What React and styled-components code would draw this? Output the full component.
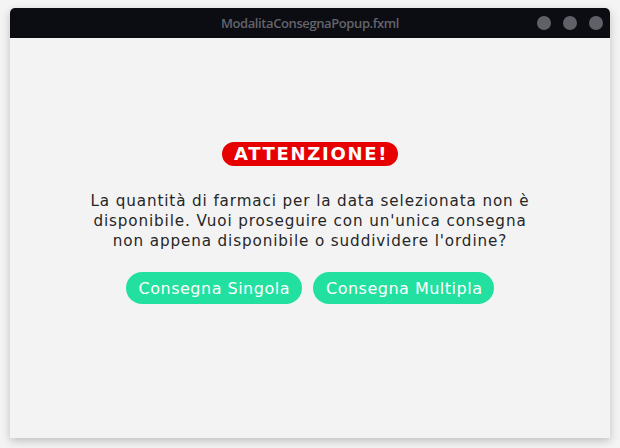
import React from "react";
import styled, { createGlobalStyle } from "styled-components";

const Global = createGlobalStyle`
  html, body { margin: 0; padding: 0; background: #f3f3f3; }
  body { width: 620px; height: 448px; overflow: hidden; }
`;

const Page = styled.div`
  width: 620px;
  height: 448px;
  padding: 8px 10px 10px 10px;
  box-sizing: border-box;
  background: #f4f4f4;
`;

const Window = styled.div`
  width: 600px;
  height: 430px;
  display: flex;
  flex-direction: column;
  border-radius: 5px 5px 0 0;
  overflow: hidden;
  background: #f3f3f3;
  box-shadow: 0 3px 10px rgba(0, 0, 0, 0.22);
`;

const TitleBar = styled.div`
  height: 30px;
  flex: 0 0 30px;
  background: #0c0d12;
  display: grid;
  grid-template-columns: 1fr auto 1fr;
  align-items: center;
`;

const Title = styled.div`
  grid-column: 2;
  font-family: "Open Sans", "DejaVu Sans", sans-serif;
  font-size: 13px;
  font-weight: 600;
  letter-spacing: -0.4px;
  color: #63646c;
`;

const Controls = styled.div`
  grid-column: 3;
  justify-self: end;
  display: flex;
  gap: 12px;
  padding-right: 7px;
`;

const Dot = styled.span`
  width: 14px;
  height: 14px;
  border-radius: 50%;
  background: #5f6068;
`;

const Body = styled.div`
  flex: 1;
  display: flex;
  flex-direction: column;
  align-items: center;
  padding-top: 105px;
  font-family: "DejaVu Sans", sans-serif;
`;

const Badge = styled.div`
  background: #e70000;
  color: #fff;
  font-weight: bold;
  font-size: 18px;
  letter-spacing: 1.7px;
  line-height: 24px;
  height: 24px;
  padding: 0 10px 0 12px;
  border-radius: 12px;
  margin-top: -1px;
`;

const Message = styled.p`
  margin: 25px 0 0 0;
  width: 460px;
  text-align: center;
  font-size: 15.2px;
  letter-spacing: 0.88px;
  line-height: 20px;
  color: #262626;
`;

const Actions = styled.div`
  display: flex;
  gap: 11px;
  margin-top: 21px;
`;

const Button = styled.button`
  height: 32px;
  padding: 0 12px 0 13px;
  border: none;
  border-radius: 16px;
  background: #22e0a0;
  color: #fff;
  font-family: "DejaVu Sans", sans-serif;
  font-size: 16px;
  letter-spacing: 0.5px;
  cursor: pointer;
`;

export default function App() {
  return (
    <>
      <Global />
      <Page>
        <Window>
          <TitleBar>
            <Title>ModalitaConsegnaPopup.fxml</Title>
            <Controls>
              <Dot />
              <Dot />
              <Dot />
            </Controls>
          </TitleBar>
          <Body>
            <Badge>ATTENZIONE!</Badge>
            <Message>
              La quantità di farmaci per la data selezionata non è disponibile. Vuoi
              proseguire con un'unica consegna non appena disponibile o suddividere
              l'ordine?
            </Message>
            <Actions>
              <Button>Consegna Singola</Button>
              <Button>Consegna Multipla</Button>
            </Actions>
          </Body>
        </Window>
      </Page>
    </>
  );
}
